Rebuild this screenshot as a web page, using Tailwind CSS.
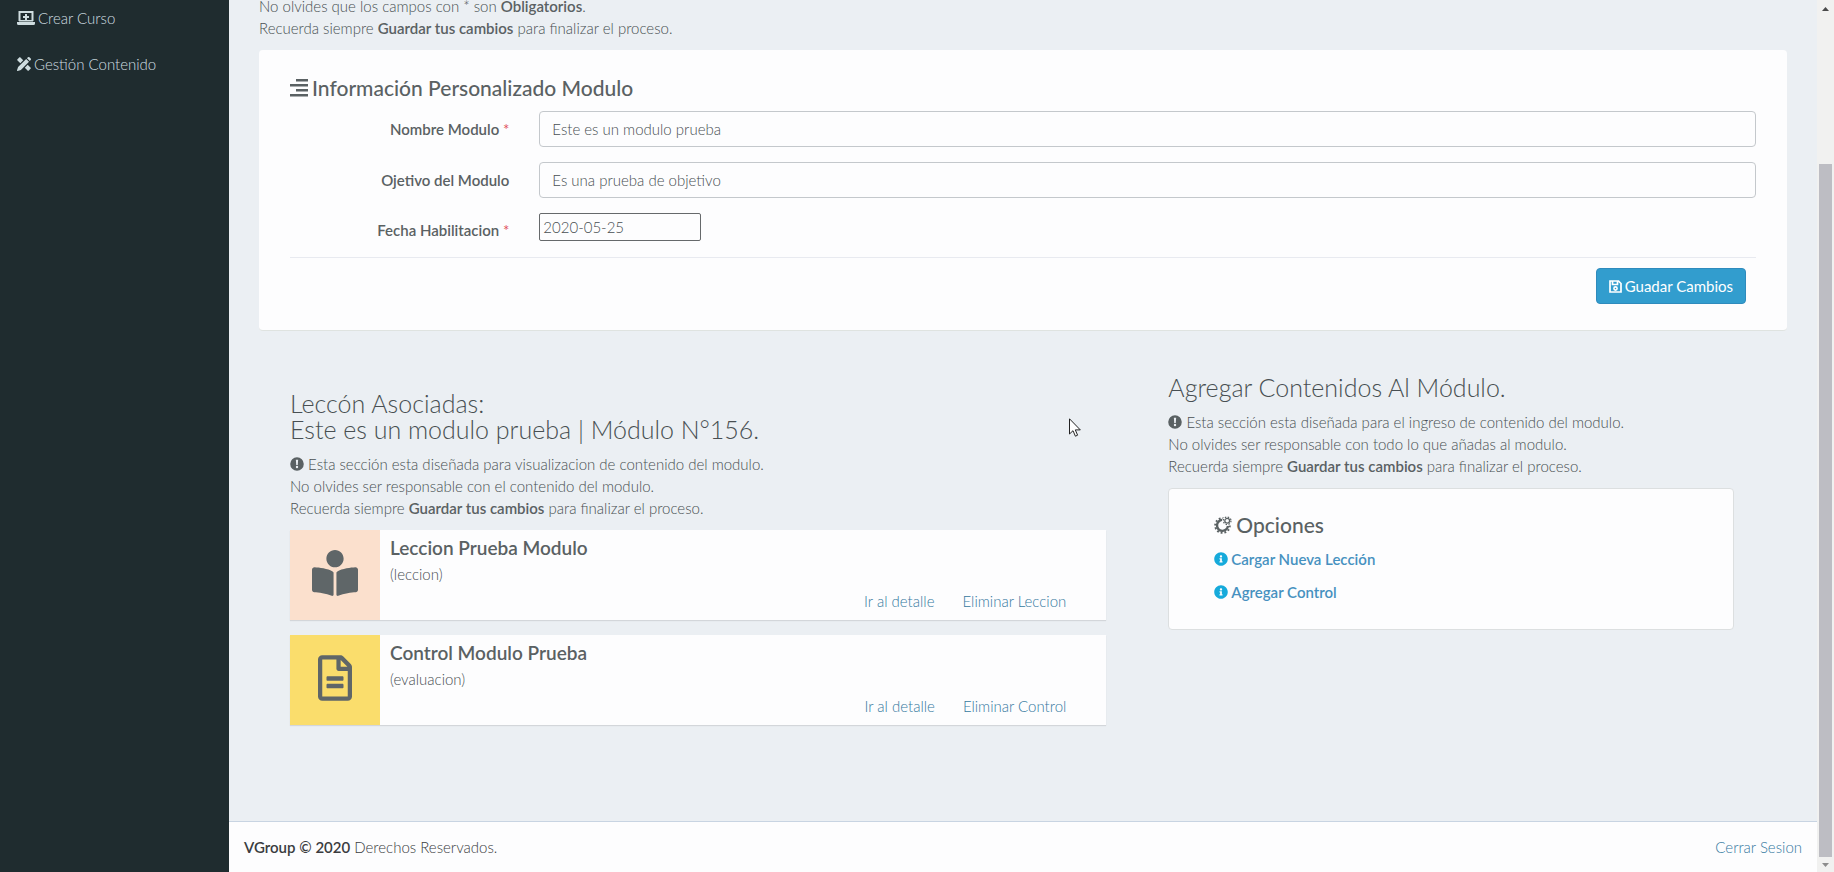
<!DOCTYPE html>
<html lang="es">
<head>
<meta charset="utf-8">
<title>Módulo</title>
<script src="https://cdn.jsdelivr.net/npm/@tailwindcss/browser@4"></script>
</head>
<body class="min-h-screen flex bg-[#ebeff3] font-['Lato','Open_Sans',sans-serif] text-[15px] leading-[22px] font-light text-[#484f52]">
<svg class="hidden" aria-hidden="true">
  <symbol id="warn" viewBox="0 0 512 512"><path fill="currentColor" fill-rule="evenodd" d="M256 8a248 248 0 1 0 0 496a248 248 0 1 0 0-496zM214 100h84l-14 190h-56zM256 320a44 44 0 1 1 0 88a44 44 0 1 1 0-88z"/></symbol>
  <symbol id="info" viewBox="0 0 512 512"><path fill="currentColor" d="M256 8C119.043 8 8 119.083 8 256c0 136.997 111.043 248 248 248s248-111.003 248-248C504 119.083 392.957 8 256 8zm0 110c23.196 0 42 18.804 42 42s-18.804 42-42 42-42-18.804-42-42 18.804-42 42-42zm56 254c0 6.627-5.373 12-12 12h-88c-6.627 0-12-5.373-12-12v-24c0-6.627 5.373-12 12-12h12v-64h-12c-6.627 0-12-5.373-12-12v-24c0-6.627 5.373-12 12-12h64c6.627 0 12 5.373 12 12v100h12c6.627 0 12 5.373 12 12v24z"/></symbol>
</svg>

<nav class="w-[229px] shrink-0 bg-[#1f2c2f] text-[#cfdde0]">
  <a href="#" class="flex items-center gap-[3px] h-10 pb-1 pl-[17px]">
    <svg class="w-[18px] h-[14px]" viewBox="0 0 18 14"><path fill="none" stroke="currentColor" stroke-width="2" d="M2.500 10V1H15.500V10"/><path fill="currentColor" d="M2 9h14v1.500H2zM8 3h2v2h2v2h-2v2H8V7H6V5h2zM0 11h18v1.500Q18 14 16.500 14h-15Q0 14 0 12.500z"/></svg>
    Crear Curso
  </a>
  <a href="#" class="flex items-center gap-[3px] h-12 pl-[17px]">
    <svg class="w-[14px] h-[14px]" viewBox="0 0 14 14" fill="currentColor"><path d="M3.200 0.300L6.200 3.300L3.300 6.200L0.300 3.200Q0 2.800 0.300 2.400L2.400 0.300Q2.800 0 3.200 0.300zM10.700 7.800L13.700 10.800Q14 11.200 13.700 11.600L11.600 13.700Q11.200 14 10.800 13.700L7.800 10.700zM9.200 2L12 4.800L3.900 12.900L0.700 14Q-0.100 14.100 0 13.300L1.100 10.100zM10 1.200L10.900 0.300Q11.700-0.300 12.400 0.300L13.700 1.600Q14.300 2.300 13.700 3.100L12.800 4z"/></svg>
    Gestión Contenido
  </a>
</nav>

<div class="flex-1 min-w-0 flex flex-col">
  <main class="flex-1 px-[30px]">
    <p class="-mt-[5px]">No olvides que los campos con * son <b class="font-semibold text-[#5a6163]">Obligatorios</b>.<br>Recuerda siempre <b class="font-semibold text-[#5a6163]">Guardar tus cambios</b> para finalizar el proceso.</p>

    <form class="mt-[11px] bg-[#fdfdfe] border-b border-[#dfe3e0] rounded-sm px-[31px] pt-[26px] pb-[26px]">
      <h2 class="flex items-center gap-1 text-[21px] leading-6 font-medium mb-[11px] text-[#5a6163]">
        <svg class="w-[18px] h-[18px]" viewBox="0 0 18 18" fill="currentColor"><path d="M6 0h12v2.500H6zM0 5h18v2.500H0zM6 10h12v2.500H6zM0 15h18v2.500H0z"/></svg>
        Información Personalizado Modulo
      </h2>
      <div class="-mx-[15px] flex items-center mb-[15px]">
        <label for="nombre" class="w-1/6 px-[15px] text-right font-semibold text-[#5a6163]">Nombre Modulo <span class="text-[#e0505c] font-normal">*</span></label>
        <div class="flex-1 px-[15px]"><input id="nombre" type="text" value="Este es un modulo prueba" class="block w-full h-9 px-3 border border-[#c4c8cc] rounded-sm bg-transparent"></div>
      </div>
      <div class="-mx-[15px] flex items-center mb-[15px]">
        <label for="objetivo" class="w-1/6 px-[15px] text-right font-semibold text-[#5a6163]">Ojetivo del Modulo</label>
        <div class="flex-1 px-[15px]"><input id="objetivo" type="text" value="Es una prueba de objetivo" class="block w-full h-9 px-3 border border-[#c4c8cc] rounded-sm bg-transparent"></div>
      </div>
      <div class="-mx-[15px] flex items-start mb-4">
        <label for="fecha" class="w-1/6 px-[15px] pt-[6px] text-right font-semibold text-[#5a6163]">Fecha Habilitacion <span class="text-[#e0505c] font-normal">*</span></label>
        <div class="flex-1 px-[15px]"><input id="fecha" type="text" value="2020-05-25" class="block w-[162px] h-7 px-[3px] border border-[#66696b] rounded-xs bg-transparent"></div>
      </div>
      <hr class="border-[#e8eaf0] mb-[10px]">
      <div class="flex justify-end pr-[10px]">
        <button type="button" class="flex items-center gap-[3px] h-9 px-3 rounded-sm border border-[#2f8bbd] bg-[#329dce] text-white font-normal">
          <svg class="w-[13px] h-[13px]" viewBox="0 0 13 13"><path fill="none" stroke="currentColor" stroke-width="1.700" d="M1 1H9.500L12 3.500V12H1zM3.500 1V4.500H8.500V1"/><circle cx="6.500" cy="8.500" r="1.600" fill="none" stroke="currentColor" stroke-width="1.600"/></svg>
          Guadar Cambios
        </button>
      </div>
    </form>

    <div class="flex">
      <section class="w-7/12 pl-[31px] pr-11 pt-[59px]">
        <h2 class="text-[25px] leading-[26px] mb-[11px]">Leccón Asociadas:<br>Este es un modulo prueba | Módulo N°156.</h2>
        <p class="mb-[11px]"><svg class="inline w-[14px] h-[14px] -mt-1 text-[#5a6163]" aria-hidden="true"><use href="#warn"/></svg> Esta sección esta diseñada para visualizacion de contenido del modulo.<br>No olvides ser responsable con el contenido del modulo.<br>Recuerda siempre <b class="font-semibold text-[#5a6163]">Guardar tus cambios</b> para finalizar el proceso.</p>

        <article class="flex h-[90px] mb-[15px] bg-[#fdfdfe] shadow-[0_1px_1px_rgba(0,0,0,0.1)]">
          <div class="w-[90px] grid place-items-center bg-[#fbe0cd] text-[#5f6668]"><svg class="w-[46px] h-[46px] -mt-1" viewBox="0 0 512 512" fill="currentColor"><path d="M352 96c0-53.02-42.98-96-96-96s-96 42.98-96 96 42.98 96 96 96 96-42.98 96-96zM233.59 241.1c-59.33-36.32-155.43-46.3-203.79-49.05C13.55 191.13 0 203.51 0 219.14v222.8c0 14.33 11.59 26.28 26.49 27.05 43.66 2.29 131.99 10.68 193.04 41.43 9.37 4.72 20.48-1.71 20.48-11.87V252.56c-.01-4.67-2.32-8.95-6.42-11.46zm248.61-49.05c-48.35 2.74-144.46 12.73-203.78 49.05-4.1 2.51-6.41 6.96-6.41 11.63v245.79c0 10.19 11.14 16.63 20.54 11.9 61.04-30.72 149.32-39.11 192.97-41.4 14.9-.78 26.49-12.73 26.49-27.06V219.14c-.01-15.63-13.56-28.01-29.8-27.09z"/></svg></div>
          <div class="flex-1 flex flex-col pl-[10px] pr-10 pt-[7px] pb-2">
            <h3 class="text-[19px] font-semibold text-[#5a6163]">Leccion Prueba Modulo</h3>
            <p class="pt-1">(leccion)</p>
            <div class="mt-auto flex justify-end gap-7 text-[#35799e]"><a href="#">Ir al detalle</a><a href="#">Eliminar Leccion</a></div>
          </div>
        </article>

        <article class="flex h-[90px] mb-[15px] bg-[#fdfdfe] shadow-[0_1px_1px_rgba(0,0,0,0.1)]">
          <div class="w-[90px] grid place-items-center bg-[#fadd6c] text-[#5f6668]"><svg class="w-[34px] h-[46px] -mt-1" viewBox="0 0 384 512" fill="currentColor"><path d="M288 248v28c0 6.600-5.400 12-12 12H108c-6.600 0-12-5.400-12-12v-28c0-6.600 5.400-12 12-12h168c6.600 0 12 5.400 12 12zm-12 72H108c-6.600 0-12 5.400-12 12v28c0 6.600 5.400 12 12 12h168c6.600 0 12-5.400 12-12v-28c0-6.600-5.400-12-12-12zm108-188.100V464c0 26.500-21.500 48-48 48H48c-26.500 0-48-21.500-48-48V48C0 21.500 21.500 0 48 0h204.100C264.800 0 277 5.100 286 14.100L369.900 98c9 8.900 14.100 21.200 14.100 33.900zm-128-80V128h76.100L256 51.900zM336 464V176H232c-13.300 0-24-10.700-24-24V48H48v416h288z"/></svg></div>
          <div class="flex-1 flex flex-col pl-[10px] pr-10 pt-[7px] pb-2">
            <h3 class="text-[19px] font-semibold text-[#5a6163]">Control Modulo Prueba</h3>
            <p class="pt-1">(evaluacion)</p>
            <div class="mt-auto flex justify-end gap-7 text-[#35799e]"><a href="#">Ir al detalle</a><a href="#">Eliminar Control</a></div>
          </div>
        </article>
      </section>

      <section class="w-5/12 pl-[18px] pr-[53px] pt-[43px]">
        <h2 class="text-[25px] leading-[26px] mb-[11px]">Agregar Contenidos Al Módulo.</h2>
        <p class="mb-[11px]"><svg class="inline w-[14px] h-[14px] -mt-1 text-[#5a6163]" aria-hidden="true"><use href="#warn"/></svg> Esta sección esta diseñada para el ingreso de contenido del modulo.<br>No olvides ser responsable con todo lo que añadas al modulo.<br>Recuerda siempre <b class="font-semibold text-[#5a6163]">Guardar tus cambios</b> para finalizar el proceso.</p>
        <div class="bg-[#fdfdfe] border border-[#dcdfe0] rounded-sm pl-[45px] pt-6 pb-[26px]">
          <h3 class="flex items-center gap-1 text-[21px] leading-6 font-medium mb-[11px] text-[#5a6163]">
            <svg class="w-[18px] h-[18px]" viewBox="0 0 18 18" fill="none" stroke="currentColor"><path stroke-width="2.400" d="M9.500 4A5.500 5.500 0 1 0 14 9.500"/><circle cx="8.500" cy="9.500" r="7.300" stroke-width="2" stroke-dasharray="1.900 1.922" pathLength="45.860"/><circle cx="13" cy="5" r="4.500" fill="#fdfdfe" stroke="#fdfdfe"/><circle cx="13.200" cy="4.800" r="2.400" stroke-width="1.300"/><circle cx="13.200" cy="4.800" r="3.800" stroke-width="1.200" stroke-dasharray="1.500 1.500"/></svg>
            Opciones
          </h3>
          <a href="#" class="flex w-fit items-center gap-[3px] font-semibold text-[#4691c0] mb-[11px]"><svg class="w-[14px] h-[14px] text-[#16aadb]" aria-hidden="true"><use href="#info"/></svg>Cargar Nueva Lección</a>
          <a href="#" class="flex w-fit items-center gap-[3px] font-semibold text-[#4691c0]"><svg class="w-[14px] h-[14px] text-[#16aadb]" aria-hidden="true"><use href="#info"/></svg>Agregar Control</a>
        </div>
      </section>
    </div>
  </main>

  <footer class="flex justify-between px-[15px] pt-[14px] pb-[14px] border-t border-[#c8d4e2] bg-[#fdfdfe] text-[#3a3c3e]">
    <p><b class="font-semibold">VGroup © 2020</b> Derechos Reservados.</p>
    <a href="#" class="text-[#35799e]">Cerrar Sesion</a>
  </footer>
</div>

<div class="w-[17px] shrink-0 flex flex-col items-center bg-[#f1f1f0] pt-[7px] pb-[5px]" aria-hidden="true">
  <svg class="w-[7px] h-1" viewBox="0 0 7 4"><path fill="#4a4a4a" d="M0 4L3.500 0L7 4z"/></svg>
  <div class="mt-[153px] flex-1 w-[13px] bg-[#bdbdc3]"></div>
  <svg class="mt-[6px] w-[7px] h-1" viewBox="0 0 7 4"><path fill="#8c8c8c" d="M0 0L3.500 4L7 0z"/></svg>
</div>

<svg class="absolute left-[1069px] top-[418px] w-3 h-[19px]" viewBox="0 0 12 19" aria-hidden="true"><path fill="#fff" stroke="#222" d="M0.500 0.800V16L4 12.700L6.400 18.200L8.600 17.200L6.300 11.900H11.300z"/></svg>
</body>
</html>
